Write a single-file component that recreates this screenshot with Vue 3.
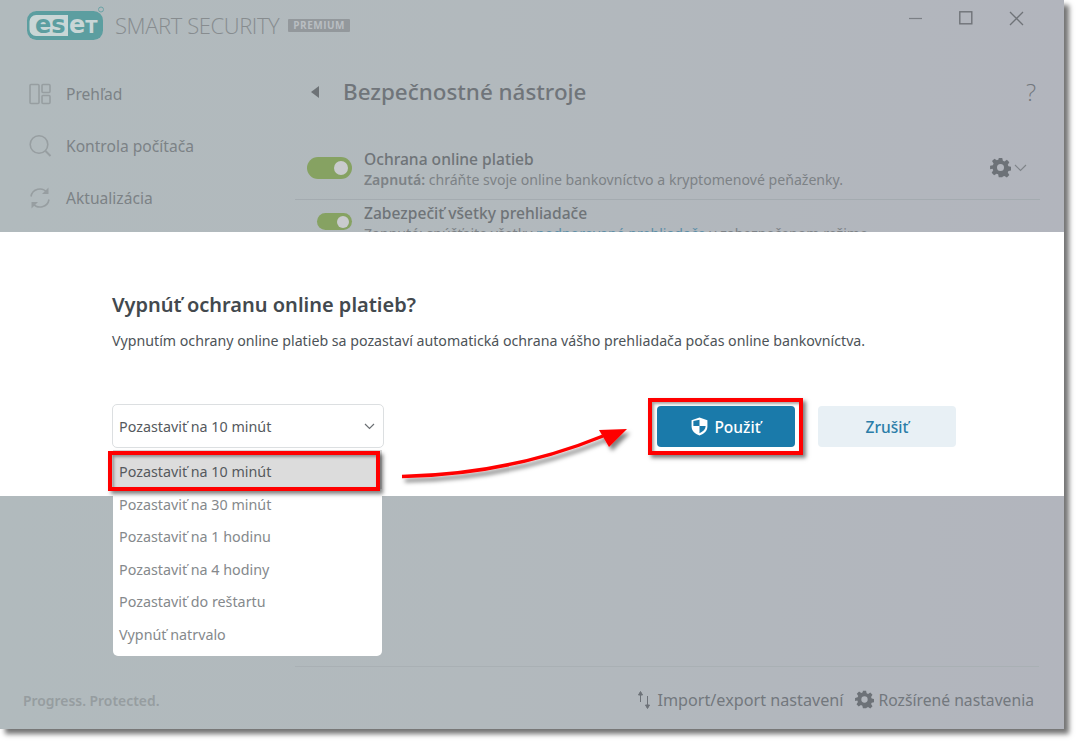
<script setup>
const nav = [
  { id: 'overview', label: 'Prehľad' },
  { id: 'scan', label: 'Kontrola počítača' },
  { id: 'update', label: 'Aktualizácia' }
]
const options = ['Pozastaviť na 10 minút', 'Pozastaviť na 30 minút', 'Pozastaviť na 1 hodinu', 'Pozastaviť na 4 hodiny', 'Pozastaviť do reštartu', 'Vypnúť natrvalo']
</script>

<template>
  <div class="page">
    <div class="window">
      <header class="head">
        <div class="logo">
          <svg width="78" height="31" viewBox="0 0 78 31">
            <rect x="1" y="5" width="76" height="29" rx="9.500" fill="#5c9ea0" />
            <path d="M10 9h32v21H10a6.500 6.500 0 0 1-6.500-6.500v-8A6.500 6.500 0 0 1 10 9z" fill="#c9d6d6" />
            <text x="9" y="27" class="logo-t a">es</text>
            <text x="43" y="27" class="logo-t b">e<tspan font-size="18">T</tspan></text>
            <circle cx="75" cy="3.500" r="2.500" fill="none" stroke="#6ba3a6" />
          </svg>
          <span class="brand">SMART SECURITY</span>
          <span class="tag">PREMIUM</span>
        </div>
        <div class="winbtns">
          <svg width="14" height="14" viewBox="0 0 14 14"><path d="M0 7.500h13" stroke="#7b7f85" stroke-width="1.200" /></svg>
          <svg width="14" height="14" viewBox="0 0 14 14"><rect x=".8" y=".8" width="12" height="12" fill="none" stroke="#6f7378" stroke-width="1.400" /></svg>
          <svg width="15" height="15" viewBox="0 0 15 15"><path d="M1 1l13 13M14 1L1 14" stroke="#6f7378" stroke-width="1.300" /></svg>
        </div>
      </header>

      <div class="body">
        <aside class="side">
          <div v-for="n in nav" :key="n.id" class="navitem">
            <svg width="24" height="24" viewBox="0 0 24 24" fill="none" stroke="#979ea1" stroke-width="1.600">
              <template v-if="n.id === 'overview'">
                <rect x="2" y="2.500" width="9" height="19" rx="1" />
                <rect x="14" y="2.500" width="8" height="8" rx="1" />
                <rect x="14" y="13.500" width="8" height="8" rx="1" />
              </template>
              <template v-else-if="n.id === 'scan'">
                <circle cx="11" cy="10.500" r="8.800" />
                <path d="M17.500 17l5 5" stroke-width="2" />
              </template>
              <template v-else>
                <path d="M3 10.500A9 9 0 0 1 19 6.500" />
                <path d="M21 13.500A9 9 0 0 1 5 17.500" />
                <path d="M20.500 1.500v6.500h-6.500z" fill="#979ea1" stroke="none" />
                <path d="M3.500 22.500v-6.500H10z" fill="#979ea1" stroke="none" />
              </template>
            </svg>
            <span>{{ n.label }}</span>
          </div>
          <div class="slogan">Progress. Protected.</div>
        </aside>

        <main class="main">
          <div class="titlebar">
            <span class="back"></span>
            <h1>Bezpečnostné nástroje</h1>
            <span class="help">?</span>
          </div>
          <div class="row first">
            <span class="toggle big"><i></i></span>
            <div class="rowtext">
              <div class="rowtitle">Ochrana online platieb</div>
              <div class="rowsub"><b>Zapnutá:</b> chráňte svoje online bankovníctvo a kryptomenové peňaženky.</div>
            </div>
            <div class="gear">
              <svg width="21" height="21" viewBox="0 0 24 24"><path fill="#6d7278" fill-rule="evenodd" d="M10 1h4l.7 3.200 1.800.8 2.800-1.800 2.800 2.800-1.800 2.800.8 1.800 3.200.7v4l-3.200.7-.8 1.800 1.800 2.800-2.800 2.800-2.800-1.800-1.800.8L14 23h-4l-.7-3.200-1.800-.8-2.800 1.800-2.800-2.800 1.800-2.800-.8-1.800L.1 14v-4l3.200-.7.8-1.800-1.800-2.800 2.800-2.800 2.800 1.800 1.800-.8zM12 8a4 4 0 1 0 0 8 4 4 0 0 0 0-8z" /></svg>
              <svg width="13" height="8" viewBox="0 0 13 8"><path d="M1 1l5.500 5.500L12 1" fill="none" stroke="#7f8489" stroke-width="1.100" /></svg>
            </div>
          </div>
          <div class="row second">
            <span class="toggle small"><i></i></span>
            <div class="rowtext">
              <div class="rowtitle">Zabezpečiť všetky prehliadače</div>
              <div class="rowsub">Zapnuté: spúšťajte všetky <span class="link">podporované prehliadače</span> v zabezpečenom režime.</div>
            </div>
          </div>
          <div class="spacer"></div>
          <footer class="foot">
            <span class="footlink wide">
              <svg width="16" height="20" viewBox="0 0 16 20"><path d="M4.500 12V3M2.500 5L4.500 1.500 6.500 5zM11.500 6v10M9.500 15l2 3.500 2-3.500z" fill="#6d7278" stroke="#6d7278" stroke-width="1" /></svg>
              Import/export nastavení
            </span>
            <span class="footlink">
              <svg width="19" height="19" viewBox="0 0 24 24"><path fill="#6d7278" fill-rule="evenodd" d="M10 1h4l.7 3.200 1.800.8 2.800-1.800 2.800 2.800-1.800 2.800.8 1.800 3.200.7v4l-3.200.7-.8 1.800 1.800 2.800-2.800 2.800-2.800-1.800-1.800.8L14 23h-4l-.7-3.200-1.800-.8-2.800 1.800-2.800-2.800 1.800-2.800-.8-1.800L.1 14v-4l3.200-.7.8-1.800-1.800-2.800 2.800-2.800 2.800 1.800 1.800-.8zM12 8a4 4 0 1 0 0 8 4 4 0 0 0 0-8z" /></svg>
              Rozšírené nastavenia
            </span>
          </footer>
        </main>
      </div>

      <section class="dialog">
        <h2>Vypnúť ochranu online platieb?</h2>
        <p>Vypnutím ochrany online platieb sa pozastaví automatická ochrana vášho prehliadača počas online bankovníctva.</p>
        <div class="actions">
          <div class="selectwrap">
            <div class="select">
              <span>Pozastaviť na 10 minút</span>
              <svg width="11" height="7" viewBox="0 0 11 7"><path d="M1 1l4.500 4.500L10 1" fill="none" stroke="#6b6f73" stroke-width="1.200" /></svg>
            </div>
            <ul class="menu">
              <li v-for="(o, i) in options" :key="o" :class="{ sel: i === 0 }">{{ o }}</li>
            </ul>
            <div class="mark markopt"></div>
          </div>
          <div class="btns">
            <button class="btn primary">
              <svg width="17" height="19" viewBox="0 0 16 18">
                <path d="M8 .5L15.500 3v6c0 4-3 7-7.500 8.500C3.500 16 .5 13 .5 9V3z" fill="#fff" />
                <path d="M8 2.500v6H2.200V3.900zM8 8.500h5.800c0 3-2.300 5.300-5.800 6.800z" fill="#1a7aaa" />
              </svg>
              Použiť
              <span class="mark markbtn"></span>
            </button>
            <button class="btn ghost">Zrušiť</button>
          </div>
        </div>
      </section>

      <svg class="arrow" width="240" height="70" viewBox="0 0 240 70">
        <defs>
          <filter id="sh" x="-10%" y="-30%" width="125%" height="170%">
            <feDropShadow dx="3" dy="4" stdDeviation="2" flood-color="#000" flood-opacity=".5" />
          </filter>
        </defs>
        <g filter="url(#sh)">
          <path d="M2 56.500C70 55 135 44 203 16" fill="none" stroke="#f00" stroke-width="3.500" />
          <path d="M227 9L199 10 209 27z" fill="#f00" />
        </g>
      </svg>
    </div>
  </div>
</template>

<style>
html, body { margin: 0; background: #fff; }
</style>

<style scoped>
.page {
  width: 1079px;
  height: 744px;
  background: #fff;
  overflow: hidden;
  font-family: "Noto Sans", "Open Sans", sans-serif;
}
.window {
  position: relative;
  width: 1064px;
  height: 729px;
  display: flex;
  flex-direction: column;
  background: linear-gradient(90deg, #b1babd 0%, #b2b9bd 45%, #b2b5bd 100%);
  box-shadow: 5px 5px 5px rgba(0, 0, 0, .55);
  color: #6f7478;
}
.head {
  height: 68px;
  flex: none;
  display: flex;
  justify-content: space-between;
  padding: 6px 40px 0 26px;
  box-sizing: border-box;
}
.logo { display: flex; align-items: flex-start; height: 40px; }
.logo svg { flex: none; overflow: visible; }
.logo-t { font: 700 24px "DejaVu Sans", sans-serif; }
.a { fill: #5c9ea0; }
.b { fill: #c9d6d6; }
.brand {
  margin: 7px 0 0 11px;
  font: 300 22px/24px "Open Sans", sans-serif;
  letter-spacing: -.4px;
  color: #878c8f;
  white-space: nowrap;
}
.tag {
  margin: 13px 0 0 9px;
  padding: 0 5px;
  height: 13px;
  background: #93989c;
  border-radius: 1px;
  font: 700 10px/13px "Open Sans", sans-serif;
  letter-spacing: .5px;
  color: #b9bec2;
}
.winbtns { display: flex; gap: 36px; align-items: center; height: 24px; }
.body { flex: 1; display: flex; min-height: 0; }
.side {
  width: 295px;
  flex: none;
  box-sizing: border-box;
  padding: 14px 0 0 28px;
  display: flex;
  flex-direction: column;
  gap: 28px;
  position: relative;
}
.navitem {
  display: flex;
  align-items: center;
  gap: 14px;
  height: 24px;
  font-size: 15.600px;
  color: #7c8286;
}
.slogan {
  margin-top: auto;
  padding: 0 0 19px;
  margin-left: -5px;
  font-size: 13.900px;
  font-weight: 600;
  color: #969da0;
}
.main { flex: 1; min-width: 0; display: flex; flex-direction: column; }
.titlebar {
  display: flex;
  align-items: center;
  height: 48px;
  padding: 0 28px 0 16px;
  margin-bottom: 2px;
}
.back {
  width: 0;
  height: 0;
  border: 6.500px solid transparent;
  border-left: 0;
  border-right: 8px solid #6d7276;
  margin-right: 24px;
}
h1 {
  margin: 0;
  flex: 1;
  font: 500 22.400px/30px "Noto Sans", sans-serif;
  color: #70757a;
}
.help { font: 300 24px/30px "Open Sans", sans-serif; color: #73787d; }
.row { display: flex; align-items: flex-start; flex: none; }
.first {
  margin-top: 31px;
  height: 51px;
  padding: 0 13px 0 12px;
  box-sizing: border-box;
  border-bottom: 1px solid #a4abb0;
  margin-right: 24px;
}
.second { height: 40px; padding-left: 22px; margin-top: 3px; }
.toggle { display: flex; align-items: center; justify-content: flex-end; background: #86a262; flex: none; }
.toggle i { display: block; background: #c9cbcd; border-radius: 50%; }
.big { width: 45px; height: 22px; border-radius: 11px; margin: 8px 12px 0 0; padding-right: 4px; box-sizing: border-box; }
.big i { width: 14px; height: 14px; }
.small { width: 35px; height: 17px; border-radius: 9px; margin: 10px 12px 0 0; padding-right: 3px; box-sizing: border-box; }
.small i { width: 12px; height: 12px; }
.rowtext { flex: 1; min-width: 0; }
.rowtitle { font-size: 15.600px; line-height: 21px; font-weight: 500; color: #6f7478; }
.rowsub { font-size: 14.100px; line-height: 20px; color: #7d8286; white-space: nowrap; }
.rowsub b { font-weight: 600; }
.link { color: #5d8fa8; }
.gear { display: flex; align-items: center; gap: 3px; margin-top: 8px; }
.spacer { flex: 1; }
.foot {
  height: 63px;
  flex: none;
  border-top: 1px solid #a9b0b4;
  box-sizing: border-box;
  display: flex;
  justify-content: flex-end;
  align-items: center;
  gap: 11px;
  padding: 3px 5px 0 0;
  margin-right: 25px;
  font-size: 15.700px;
  color: #73787d;
}
.footlink { display: flex; align-items: center; gap: 5px; white-space: nowrap; }
.wide { font-size: 16.200px; }
.dialog {
  position: absolute;
  left: 0;
  top: 232px;
  width: 100%;
  height: 264px;
  box-sizing: border-box;
  background: #fff;
  padding: 58px 0 0 112px;
  color: #4b5156;
}
h2 { margin: 0; font: 600 20px/30px "Noto Sans", sans-serif; color: #43494e; }
p { margin: 11px 0 0; font-size: 14.200px; line-height: 20px; color: #4d5358; }
.actions { display: flex; margin-top: 53px; align-items: flex-start; }
.selectwrap { position: relative; width: 272px; }
.select {
  height: 44px;
  box-sizing: border-box;
  border: 1px solid #dcdfe1;
  border-radius: 5px;
  display: flex;
  align-items: center;
  justify-content: space-between;
  padding: 1px 8px 0 6px;
  font-size: 14.300px;
  color: #55595d;
}
.menu {
  position: absolute;
  left: 1px;
  top: 46px;
  width: 269px;
  margin: 0;
  padding: 0;
  list-style: none;
  background: #fff;
  border-radius: 0 0 5px 5px;
  padding-bottom: 5px;
  font-size: 14.300px;
  color: #85898c;
}
.menu li {
  height: 32.400px;
  line-height: 32px;
  padding-left: 6px;
}
.menu li.sel {
  background: #dcdcdc;
  color: #55595d;
  height: 39px;
  line-height: 43px;
}
.mark {
  position: absolute;
  box-sizing: border-box;
  border: 4px solid #f00;
  box-shadow: 3px 3px 4px rgba(0, 0, 0, .5), inset 2px 2px 3px rgba(0, 0, 0, .35);
  pointer-events: none;
}
.markopt { left: -4px; top: 47px; width: 272px; height: 40px; }
.btns { display: flex; gap: 23px; margin: 2px 0 0 273px; }
.btn {
  position: relative;
  width: 138px;
  height: 41px;
  border: 0;
  border-radius: 4px;
  font: 500 15.500px "Noto Sans", sans-serif;
  display: flex;
  align-items: center;
  justify-content: center;
  gap: 6px;
}
.primary { background: #1a7aaa; color: #fff; }
.ghost { background: #e8f0f5; color: #2b7da8; }
.markbtn { left: -9px; top: -8px; width: 155px; height: 57px; }
.arrow { position: absolute; left: 400px; top: 420px; }
</style>
